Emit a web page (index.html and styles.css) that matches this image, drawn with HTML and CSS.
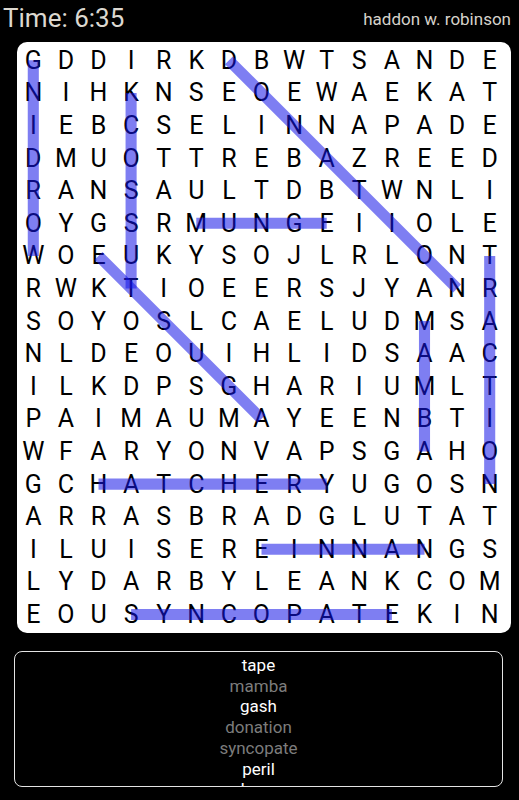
FILE: index.html
```html
<!DOCTYPE html>
<html>
<head>
<meta charset="utf-8">
<link rel="stylesheet" href="styles.css">
</head>
<body>
<header class="topbar">
  <span class="timer">Time: 6:35</span>
  <span class="author">haddon w. robinson</span>
</header>
<main class="board">
  <div class="grid" id="grid">
    <span>G</span><span>D</span><span>D</span><span>I</span><span>R</span><span>K</span><span>D</span><span>B</span><span>W</span><span>T</span><span>S</span><span>A</span><span>N</span><span>D</span><span>E</span>
    <span>N</span><span>I</span><span>H</span><span>K</span><span>N</span><span>S</span><span>E</span><span>O</span><span>E</span><span>W</span><span>A</span><span>E</span><span>K</span><span>A</span><span>T</span>
    <span>I</span><span>E</span><span>B</span><span>C</span><span>S</span><span>E</span><span>L</span><span>I</span><span>N</span><span>N</span><span>A</span><span>P</span><span>A</span><span>D</span><span>E</span>
    <span>D</span><span>M</span><span>U</span><span>O</span><span>T</span><span>T</span><span>R</span><span>E</span><span>B</span><span>A</span><span>Z</span><span>R</span><span>E</span><span>E</span><span>D</span>
    <span>R</span><span>A</span><span>N</span><span>S</span><span>A</span><span>U</span><span>L</span><span>T</span><span>D</span><span>B</span><span>T</span><span>W</span><span>N</span><span>L</span><span>I</span>
    <span>O</span><span>Y</span><span>G</span><span>S</span><span>R</span><span>M</span><span>U</span><span>N</span><span>G</span><span>E</span><span>I</span><span>I</span><span>O</span><span>L</span><span>E</span>
    <span>W</span><span>O</span><span>E</span><span>U</span><span>K</span><span>Y</span><span>S</span><span>O</span><span>J</span><span>L</span><span>R</span><span>L</span><span>O</span><span>N</span><span>T</span>
    <span>R</span><span>W</span><span>K</span><span>T</span><span>I</span><span>O</span><span>E</span><span>E</span><span>R</span><span>S</span><span>J</span><span>Y</span><span>A</span><span>N</span><span>R</span>
    <span>S</span><span>O</span><span>Y</span><span>O</span><span>S</span><span>L</span><span>C</span><span>A</span><span>E</span><span>L</span><span>U</span><span>D</span><span>M</span><span>S</span><span>A</span>
    <span>N</span><span>L</span><span>D</span><span>E</span><span>O</span><span>U</span><span>I</span><span>H</span><span>L</span><span>I</span><span>D</span><span>S</span><span>A</span><span>A</span><span>C</span>
    <span>I</span><span>L</span><span>K</span><span>D</span><span>P</span><span>S</span><span>G</span><span>H</span><span>A</span><span>R</span><span>I</span><span>U</span><span>M</span><span>L</span><span>T</span>
    <span>P</span><span>A</span><span>I</span><span>M</span><span>A</span><span>U</span><span>M</span><span>A</span><span>Y</span><span>E</span><span>E</span><span>N</span><span>B</span><span>T</span><span>I</span>
    <span>W</span><span>F</span><span>A</span><span>R</span><span>Y</span><span>O</span><span>N</span><span>V</span><span>A</span><span>P</span><span>S</span><span>G</span><span>A</span><span>H</span><span>O</span>
    <span>G</span><span>C</span><span>H</span><span>A</span><span>T</span><span>C</span><span>H</span><span>E</span><span>R</span><span>Y</span><span>U</span><span>G</span><span>O</span><span>S</span><span>N</span>
    <span>A</span><span>R</span><span>R</span><span>A</span><span>S</span><span>B</span><span>R</span><span>A</span><span>D</span><span>G</span><span>L</span><span>U</span><span>T</span><span>A</span><span>T</span>
    <span>I</span><span>L</span><span>U</span><span>I</span><span>S</span><span>E</span><span>R</span><span>E</span><span>I</span><span>N</span><span>N</span><span>A</span><span>N</span><span>G</span><span>S</span>
    <span>L</span><span>Y</span><span>D</span><span>A</span><span>R</span><span>B</span><span>Y</span><span>L</span><span>E</span><span>A</span><span>N</span><span>K</span><span>C</span><span>O</span><span>M</span>
    <span>E</span><span>O</span><span>U</span><span>S</span><span>Y</span><span>N</span><span>C</span><span>O</span><span>P</span><span>A</span><span>T</span><span>E</span><span>K</span><span>I</span><span>N</span>
  </div>
  <svg class="marks" viewBox="0 0 15 18" preserveAspectRatio="none">
    <g class="found">
      <line x1="0.5" y1="0.5" x2="0.5" y2="6.5"/>
      <line x1="3.5" y1="1.5" x2="3.5" y2="7.5"/>
      <line x1="6.5" y1="0.5" x2="13.5" y2="7.5"/>
      <line x1="5.5" y1="5.5" x2="9.5" y2="5.5"/>
      <line x1="2.5" y1="6.5" x2="7.5" y2="11.5"/>
      <line x1="12.5" y1="8.5" x2="12.5" y2="12.5"/>
      <line x1="14.5" y1="6.5" x2="14.5" y2="13.5"/>
      <line x1="2.5" y1="13.5" x2="9.5" y2="13.5"/>
      <line x1="7.5" y1="15.5" x2="12.5" y2="15.5"/>
      <line x1="3.5" y1="17.5" x2="11.5" y2="17.5"/>
    </g>
  </svg>
</main>
<section class="words">
  <ul class="wordlist">
    <li>tape</li>
    <li class="done">mamba</li>
    <li>gash</li>
    <li class="done">donation</li>
    <li class="done">syncopate</li>
    <li>peril</li>
    <li>have</li>
  </ul>
</section>
</body>
</html>
```
FILE: styles.css
```css
html, body {
  margin: 0;
  padding: 0;
  background: #000;
}
body {
  width: 519px;
  height: 800px;
  overflow: hidden;
  font-family: Roboto, "Noto Sans", "Liberation Sans", sans-serif;
}
.topbar {
  height: 42px;
  display: flex;
  justify-content: space-between;
  align-items: flex-start;
  padding: 0 8px 0 3px;
  box-sizing: border-box;
}
.timer {
  font-size: 26px;
  line-height: 30px;
  margin-top: 3px;
  color: #dcd8d0;
}
.author {
  font-size: 17px;
  line-height: 20px;
  margin-top: 9px;
  color: #d6d2ca;
}
.board {
  position: relative;
  display: block;
  margin-left: 17px;
  width: 494px;
  height: 591px;
  background: #fff;
  border-radius: 10px;
  padding-top: 2px;
  box-sizing: border-box;
}
.grid {
  display: grid;
  grid-template-columns: repeat(15, 32.6px);
  grid-auto-rows: 32.6px;
}
.grid span {
  display: flex;
  align-items: center;
  justify-content: center;
  font-size: 25px;
  color: #000;
  line-height: 1;
}
.marks {
  position: absolute;
  left: 0;
  top: 2px;
  width: 489px;
  height: 586.8px;
  pointer-events: none;
}
.found line {
  stroke: rgba(20, 20, 232, 0.55);
  stroke-width: 0.34;
  stroke-linecap: butt;
}
.words {
  margin: 18px 0 0 14px;
  width: 489px;
  height: 136px;
  border: 1.5px solid #e4e4e4;
  border-radius: 8px;
  box-sizing: border-box;
  overflow: hidden;
}
.wordlist {
  list-style: none;
  margin: 0;
  padding: 3px 0 0 0;
  text-align: center;
}
.wordlist li {
  font-size: 17px;
  line-height: 20.7px;
  color: #fff;
}
.wordlist li.done {
  color: #7c7c7c;
}
```
